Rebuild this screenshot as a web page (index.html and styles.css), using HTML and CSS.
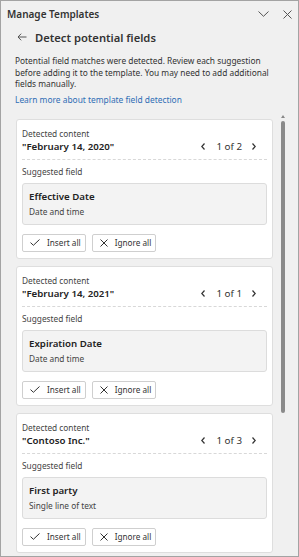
FILE: index.html
```html
<!DOCTYPE html>
<html lang="en">
<head>
    <meta charset="UTF-8">
    <meta name="viewport" content="width=device-width, initial-scale=1.0">
    <title>Manage Templates</title>
    <link rel="stylesheet" href="styles.css">
</head>
<body>
    <div class="panel">
        <div class="titlebar">
            <span class="title">Manage Templates</span>
            <span class="win-icons">
                <svg width="11" height="6" viewBox="0 0 11 6"><path d="M0.5 0.5 L5.5 5.3 L10.5 0.5" fill="none" stroke="#555" stroke-width="1"/></svg>
                <svg width="9" height="9" viewBox="0 0 9 9"><path d="M0.5 0.5 L8.5 8.5 M8.5 0.5 L0.5 8.5" fill="none" stroke="#555" stroke-width="1"/></svg>
            </span>
        </div>

        <div class="subhead">
            <svg class="back" width="10" height="8" viewBox="0 0 10 8"><path d="M9.5 4 H1 M4.2 0.7 L1 4 L4.2 7.3" fill="none" stroke="#555" stroke-width="1"/></svg>
            <h1>Detect potential fields</h1>
        </div>

        <p class="intro">Potential field matches were detected. Review each suggestion before adding it to the template. You may need to add additional fields manually.</p>
        <a class="learn" href="#">Learn more about template field detection</a>

        <div class="scroller">
            <div class="cards">
                <div class="card">
                    <div class="label">Detected content</div>
                    <div class="content-row">
                        <span class="value">"February 14, 2020"</span>
                        <span class="pager">
                            <svg class="prev" width="4" height="7" viewBox="0 0 4 7"><path d="M3.5 0.5 L0.8 3.5 L3.5 6.5" fill="none" stroke="#333" stroke-width="1.2"/></svg>
                            1 of 2
                            <svg class="next" width="4" height="7" viewBox="0 0 4 7"><path d="M0.5 0.5 L3.2 3.5 L0.5 6.5" fill="none" stroke="#333" stroke-width="1.2"/></svg>
                        </span>
                    </div>
                    <div class="label suggest">Suggested field</div>
                    <div class="field">
                        <div class="field-name">Effective Date</div>
                        <div class="field-type">Date and time</div>
                    </div>
                    <div class="actions">
                        <button class="btn"><svg width="10" height="7" viewBox="0 0 10 7"><path d="M0.5 3.6 L3.4 6.3 L9.5 0.5" fill="none" stroke="#333" stroke-width="1"/></svg>Insert all</button>
                        <button class="btn"><svg width="8" height="8" viewBox="0 0 8 8"><path d="M0.5 0.5 L7.5 7.5 M7.5 0.5 L0.5 7.5" fill="none" stroke="#333" stroke-width="1"/></svg>Ignore all</button>
                    </div>
                </div>

                <div class="card">
                    <div class="label">Detected content</div>
                    <div class="content-row">
                        <span class="value">"February 14, 2021"</span>
                        <span class="pager">
                            <svg class="prev" width="4" height="7" viewBox="0 0 4 7"><path d="M3.5 0.5 L0.8 3.5 L3.5 6.5" fill="none" stroke="#333" stroke-width="1.2"/></svg>
                            1 of 1
                            <svg class="next" width="4" height="7" viewBox="0 0 4 7"><path d="M0.5 0.5 L3.2 3.5 L0.5 6.5" fill="none" stroke="#333" stroke-width="1.2"/></svg>
                        </span>
                    </div>
                    <div class="label suggest">Suggested field</div>
                    <div class="field">
                        <div class="field-name">Expiration Date</div>
                        <div class="field-type">Date and time</div>
                    </div>
                    <div class="actions">
                        <button class="btn"><svg width="10" height="7" viewBox="0 0 10 7"><path d="M0.5 3.6 L3.4 6.3 L9.5 0.5" fill="none" stroke="#333" stroke-width="1"/></svg>Insert all</button>
                        <button class="btn"><svg width="8" height="8" viewBox="0 0 8 8"><path d="M0.5 0.5 L7.5 7.5 M7.5 0.5 L0.5 7.5" fill="none" stroke="#333" stroke-width="1"/></svg>Ignore all</button>
                    </div>
                </div>

                <div class="card">
                    <div class="label">Detected content</div>
                    <div class="content-row">
                        <span class="value">"Contoso Inc."</span>
                        <span class="pager">
                            <svg class="prev" width="4" height="7" viewBox="0 0 4 7"><path d="M3.5 0.5 L0.8 3.5 L3.5 6.5" fill="none" stroke="#333" stroke-width="1.2"/></svg>
                            1 of 3
                            <svg class="next" width="4" height="7" viewBox="0 0 4 7"><path d="M0.5 0.5 L3.2 3.5 L0.5 6.5" fill="none" stroke="#333" stroke-width="1.2"/></svg>
                        </span>
                    </div>
                    <div class="label suggest">Suggested field</div>
                    <div class="field">
                        <div class="field-name">First party</div>
                        <div class="field-type">Single line of text</div>
                    </div>
                    <div class="actions">
                        <button class="btn"><svg width="10" height="7" viewBox="0 0 10 7"><path d="M0.5 3.6 L3.4 6.3 L9.5 0.5" fill="none" stroke="#333" stroke-width="1"/></svg>Insert all</button>
                        <button class="btn"><svg width="8" height="8" viewBox="0 0 8 8"><path d="M0.5 0.5 L7.5 7.5 M7.5 0.5 L0.5 7.5" fill="none" stroke="#333" stroke-width="1"/></svg>Ignore all</button>
                    </div>
                </div>
            </div>

            <div class="scrollbar">
                <span class="up"></span>
                <span class="thumb"></span>
            </div>
        </div>
    </div>
</body>
</html>
```

FILE: styles.css
```css
* {
    box-sizing: border-box;
}
body {
    margin: 0;
    font-family: "Noto Sans", "Open Sans", sans-serif;
    color: #333;
    background-color: #f0f0f0;
}
.panel {
    width: 299px;
    height: 557px;
    border: 1px solid #a3a3a3;
    background-color: #f0f0f0;
    overflow: hidden;
    display: flex;
    flex-direction: column;
}
.titlebar {
    display: flex;
    align-items: center;
    justify-content: space-between;
    height: 26px;
    flex-shrink: 0;
    padding: 0 6px 0 6px;
}
.title {
    font-size: 10px;
    font-weight: 600;
    color: #333;
}
.win-icons {
    display: flex;
    align-items: center;
    gap: 14px;
}
.subhead {
    display: flex;
    align-items: center;
    height: 20px;
    flex-shrink: 0;
    padding-left: 16px;
}
.back {
    margin-right: 8px;
}
h1 {
    margin: 0;
    font-size: 11.2px;
    font-weight: 600;
    color: #333;
}
.intro {
    margin: 8px 0 0;
    padding: 0 22px 0 14px;
    font-size: 8.35px;
    line-height: 11.5px;
    color: #333;
}
.learn {
    display: block;
    margin: 4px 0 0 14px;
    font-size: 8.4px;
    line-height: 12px;
    color: #2f6db5;
    text-decoration: none;
}
.scroller {
    display: flex;
    margin-top: 7px;
    flex: 1;
    min-height: 0;
    overflow: hidden;
}
.cards {
    display: flex;
    flex-direction: column;
    gap: 7px;
    margin-left: 15px;
    width: 257px;
    padding-top: 6px;
}
.card {
    background-color: #fff;
    border: 1px solid #dedede;
    border-radius: 3px;
    padding: 8px 5px 6px;
    flex-shrink: 0;
}
.label {
    font-size: 8.3px;
    line-height: 12px;
    color: #444;
}
.content-row {
    display: flex;
    align-items: center;
    justify-content: space-between;
    height: 20px;
    padding-bottom: 5px;
    border-bottom: 1px dashed #d8d8d8;
}
.value {
    font-size: 9.7px;
    font-weight: 600;
    line-height: 14px;
    color: #222;
}
.pager {
    display: flex;
    align-items: center;
    font-size: 9.8px;
    line-height: 14px;
    color: #333;
    margin-right: 11px;
}
.prev {
    margin-right: 11px;
}
.next {
    margin-left: 10px;
}
.suggest {
    margin-top: 6px;
}
.field {
    margin-top: 5px;
    height: 42px;
    background-color: #f3f3f3;
    border: 1px solid #dcdcdc;
    border-radius: 3px;
    padding: 6px 6px 0;
}
.field-name {
    font-size: 9.7px;
    font-weight: 600;
    line-height: 14px;
    color: #222;
}
.field-type {
    font-size: 8.3px;
    line-height: 14px;
    margin-top: 1px;
    color: #444;
}
.actions {
    display: flex;
    gap: 6px;
    margin-top: 9px;
}
.btn {
    display: flex;
    align-items: center;
    gap: 7px;
    height: 18px;
    padding: 0 4px 0 7px;
    font-family: inherit;
    font-size: 8.2px;
    color: #333;
    background-color: #fff;
    border: 1px solid #cfcfcf;
    border-radius: 2px;
}
.scrollbar {
    display: flex;
    flex-direction: column;
    align-items: center;
    width: 6px;
    margin-left: 7px;
    padding-top: 2px;
}
.up {
    width: 0;
    height: 0;
    border-left: 2.5px solid transparent;
    border-right: 2.5px solid transparent;
    border-bottom: 3px solid #888;
}
.thumb {
    margin-top: 3px;
    width: 4px;
    height: 292px;
    background-color: #8a8a8a;
    border-radius: 2px;
}
```
